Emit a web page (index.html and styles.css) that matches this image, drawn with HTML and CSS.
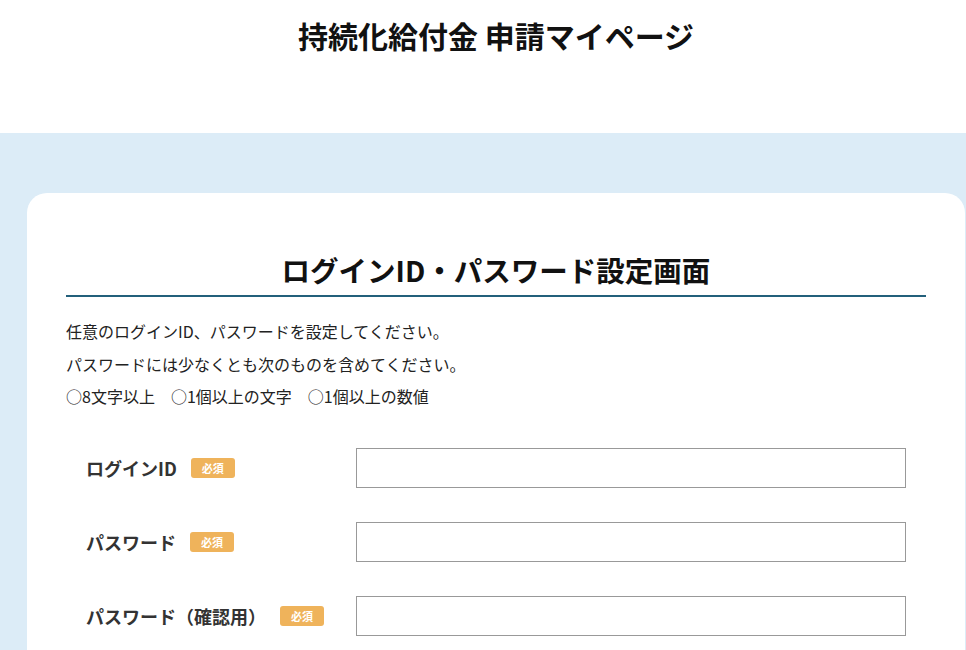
FILE: index.html
```html
<!DOCTYPE html>
<html lang="ja">
<head>
<meta charset="utf-8">
<title>持続化給付金 申請マイページ</title>
<link rel="stylesheet" href="styles.css">
</head>
<body>
<div class="page">
  <header class="site-header">
    <h1 class="site-title">持続化給付金 申請マイページ</h1>
  </header>
  <main class="main">
    <section class="card">
      <h2 class="card-title">ログインID・パスワード設定画面</h2>
      <div class="intro">
        <p>任意のログインID、パスワードを設定してください。</p>
        <p>パスワードには少なくとも次のものを含めてください。</p>
        <p>○8文字以上　○1個以上の文字　○1個以上の数値</p>
      </div>
      <form class="form">
        <div class="row">
          <label class="label">ログインID<span class="badge">必須</span></label>
          <input class="field" type="text">
        </div>
        <div class="row">
          <label class="label">パスワード<span class="badge">必須</span></label>
          <input class="field" type="password">
        </div>
        <div class="row">
          <label class="label">パスワード（確認用）<span class="badge">必須</span></label>
          <input class="field" type="password">
        </div>
      </form>
    </section>
  </main>
</div>
</body>
</html>
```

FILE: styles.css
```css
html, body {
  margin: 0;
  padding: 0;
  overflow: hidden;
  background: #ffffff;
}
body {
  font-family: "Noto Sans CJK JP", "Noto Sans", sans-serif;
  color: #222222;
}
.page {
  width: 992px;
}
.site-header {
  height: 133px;
  background: #ffffff;
  display: flex;
  justify-content: center;
  align-items: flex-start;
}
.site-title {
  margin: 13px 0 0;
  font-size: 30px;
  line-height: 44px;
  font-weight: 700;
  color: #111111;
}
.main {
  background: #dcecf7;
  padding: 60px 27px 0;
  height: 600px;
}
.card {
  background: #ffffff;
  border-radius: 20px 20px 0 0;
  padding: 56px 39px 40px;
  height: 600px;
}
.card-title {
  margin: 0;
  text-align: center;
  font-size: 28.5px;
  line-height: 42px;
  font-weight: 700;
  color: #111111;
  padding-bottom: 4px;
  border-bottom: 2px solid #23607b;
}
.intro {
  margin-top: 18px;
}
.intro p {
  margin: 0;
  font-size: 16px;
  line-height: 32.5px;
  color: #222222;
}
.form {
  margin-top: 35px;
  display: flex;
  flex-direction: column;
  gap: 34px;
  padding: 0 20px;
}
.row {
  display: flex;
  align-items: center;
}
.label {
  width: 270px;
  flex: none;
  display: flex;
  align-items: center;
  font-size: 18px;
  font-weight: 700;
  color: #333333;
}
.badge {
  margin-left: 14px;
  width: 44px;
  height: 20px;
  border-radius: 3px;
  background: #efb35b;
  color: #ffffff;
  font-size: 11px;
  font-weight: 700;
  display: inline-flex;
  align-items: center;
  justify-content: center;
}
.field {
  width: 550px;
  height: 40px;
  box-sizing: border-box;
  border: 1px solid #999999;
  border-radius: 0;
  background: #ffffff;
  margin: 0;
  padding: 0 10px;
  font-size: 16px;
}
```
